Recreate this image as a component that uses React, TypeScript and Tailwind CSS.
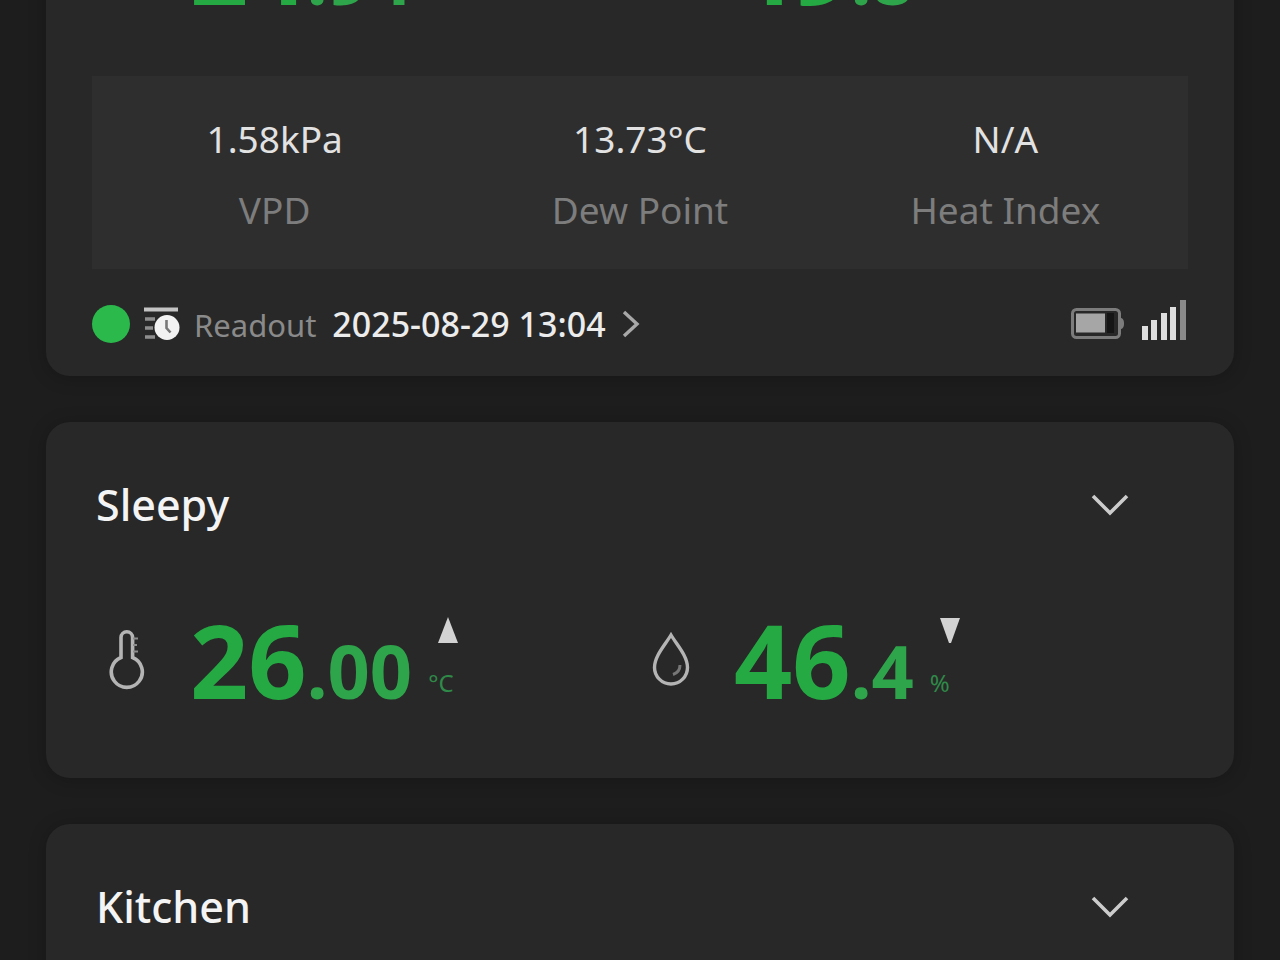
import React from 'react';

type Trend = 'up' | 'down';

interface MetricProps {
    label: string;
    icon: React.ReactNode;
    whole: string;
    fraction: string;
    unit: string;
    trend?: Trend;
}

const ThermometerIcon = () => (
    <svg width="38" height="62" viewBox="0 0 38 62" fill="none" stroke="#b4b4b4" strokeWidth="3.6" aria-hidden="true">
        <path d="M13 28.500V8.500a5.800 5.800 0 0 1 11.600 0v20a15.500 15.500 0 1 1-11.600 0Z" />
        <path d="M25 9.500h5M25 16h4M25 22.500h5" strokeWidth="2.200" stroke="#8c8c8c" />
    </svg>
);

const DropIcon = () => (
    <svg width="38" height="62" viewBox="0 0 38 62" fill="none" stroke="#b4b4b4" strokeWidth="3.400" aria-hidden="true">
        <path d="M19 6C13 16 2.500 27 2.500 38.500a16.500 16.500 0 0 0 33 0C35.500 27 25 16 19 6Z" />
        <path d="M28 36c0 5-2.500 8-7 9.500" stroke="#777777" strokeWidth="3" />
    </svg>
);

const TrendArrow = ({ trend }: { trend: Trend }) => (
    <svg className="ml-[10px]" width="20" height="26" viewBox="0 0 20 26" fill="#d2d2d2" aria-hidden="true">
        {trend === 'up' ? <path d="M10 0 20 26H0Z" /> : <path d="M0 1h20L11 26H9Z" />}
    </svg>
);

const ReadoutIcon = () => (
    <svg width="36" height="36" viewBox="0 0 36 36" fill="none" aria-hidden="true">
        <path d="M0 3.500h34" stroke="#c4c4c4" strokeWidth="4" />
        <path d="M1 13h10M1 22h8M1 31h10" stroke="#8e8e8e" strokeWidth="3.400" />
        <circle cx="23" cy="21.500" r="12.500" fill="#f2f2f2" />
        <path d="M22.500 14v8l4 4.500" stroke="#777777" strokeWidth="2.600" />
    </svg>
);

const BatteryIcon = () => (
    <svg width="53" height="32" viewBox="0 0 53 32" fill="none" aria-hidden="true">
        <rect x="1.500" y="1.500" width="47" height="28" rx="4" stroke="#7c7c7c" strokeWidth="3" />
        <rect x="5" y="5.500" width="29" height="19" fill="#a6a6a6" />
        <rect x="36" y="5" width="7" height="20" fill="#161616" />
        <path d="M49 10c3 0 4 2 4 5.500S52 21 49 21Z" fill="#7c7c7c" />
    </svg>
);

const SignalIcon = () => (
    <svg width="44" height="40" viewBox="0 0 44 40" aria-hidden="true">
        <g fill="#dedede">
            <rect x="0" y="26" width="6" height="14" />
            <rect x="9" y="20" width="6" height="20" />
            <rect x="19" y="13" width="6" height="27" />
            <rect x="28" y="7" width="6" height="33" />
        </g>
        <rect x="38" y="0" width="6" height="40" fill="#8a8a8a" />
    </svg>
);

const Metric = ({ label, icon, whole, fraction, unit, trend }: MetricProps) => (
    <div className="flex h-[100px] items-center pl-2" aria-label={label}>
        <div className="w-[82px] shrink-0">{icon}</div>
        <p className="text-[102px] leading-[100px] font-bold text-[#24a943]">
            {whole}
            <span className="text-[74px] leading-none text-[#2ea44b]">.{fraction}</span>
        </p>
        <div className="ml-4 flex h-full flex-col items-start justify-between py-[7px]">
            {trend ? <TrendArrow trend={trend} /> : <span />}
            <span className="mb-2 text-[24px] leading-6 text-[#2f8a48]">{unit}</span>
        </div>
    </div>
);

const Metrics = ({ children }: { children: React.ReactNode }) => (
    <div className="grid grid-cols-2 pl-2">{children}</div>
);

const Card = ({ className = '', children }: { className?: string; children: React.ReactNode }) => (
    <section className={`rounded-3xl bg-[#282828] px-[46px] shadow-[0_2px_18px_rgba(0,0,0,0.22)] ${className}`}>
        {children}
    </section>
);

const CardHeader = ({ name }: { name: string }) => (
    <header className="flex h-[70px] items-center justify-between pr-[59px] pl-1">
        <h2 className="text-[43px] font-medium text-[#f4f4f4]">{name}</h2>
        <button type="button" aria-label={`Expand ${name}`}>
            <svg width="38" height="24" viewBox="0 0 38 24" fill="none" stroke="#cccccc" strokeWidth="3.600" aria-hidden="true">
                <path d="m2 3 17 17L36 3" />
            </svg>
        </button>
    </header>
);

const stats = [
    { value: '1.58kPa', label: 'VPD' },
    { value: '13.73°C', label: 'Dew Point' },
    { value: 'N/A', label: 'Heat Index' },
];

export default function App() {
    return (
        <main className="flex h-screen flex-col gap-[46px] overflow-hidden bg-[#1d1d1d] px-[46px] font-['Noto_Sans',sans-serif]">
            <Card className="-mt-[84px] shrink-0 pb-7">
                <Metrics>
                    <Metric label="Temperature" icon={<ThermometerIcon />} whole="24" fraction="94" unit="°C" />
                    <Metric label="Humidity" icon={<DropIcon />} whole="49" fraction="8" unit="%" />
                </Metrics>

                <dl className="mt-[60px] grid grid-cols-3 bg-[#2e2e2e] pt-[27px] pb-6 text-center text-[37px] leading-[71px]">
                    {stats.map(s => (
                        <div key={s.label} className="flex flex-col-reverse">
                            <dt className="text-[#7d7d7d]">{s.label}</dt>
                            <dd className="text-[#e2e2e2]">{s.value}</dd>
                        </div>
                    ))}
                </dl>

                <footer className="mt-[31px] flex h-12 items-center justify-between">
                    <div className="flex items-center">
                        <span className="size-[38px] rounded-full bg-[#2bb94c]" />
                        <span className="ml-[14px]"><ReadoutIcon /></span>
                        <button type="button" className="ml-[14px] flex items-baseline leading-10">
                            <span className="text-[31px] text-[#8a8a8a]">Readout</span>
                            <span className="ml-4 text-[34px] font-medium text-[#ececec]">2025-08-29 13:04</span>
                            <svg className="ml-4 self-center" width="18" height="28" viewBox="0 0 18 28" fill="none" stroke="#a8a8a8" strokeWidth="3.400" aria-hidden="true">
                                <path d="m2 2 13 12L2 26" />
                            </svg>
                        </button>
                    </div>
                    <div className="flex items-end gap-[18px] pr-[2px] pb-2">
                        <BatteryIcon />
                        <SignalIcon />
                    </div>
                </footer>
            </Card>

            <Card className="shrink-0 pt-12 pb-[68px]">
                <CardHeader name="Sleepy" />
                <div className="mt-[70px]">
                    <Metrics>
                        <Metric label="Temperature" icon={<ThermometerIcon />} whole="26" fraction="00" unit="°C" trend="up" />
                        <Metric label="Humidity" icon={<DropIcon />} whole="46" fraction="4" unit="%" trend="down" />
                    </Metrics>
                </div>
            </Card>

            <Card className="shrink-0 pt-12 pb-[68px]">
                <CardHeader name="Kitchen" />
            </Card>
        </main>
    );
}
